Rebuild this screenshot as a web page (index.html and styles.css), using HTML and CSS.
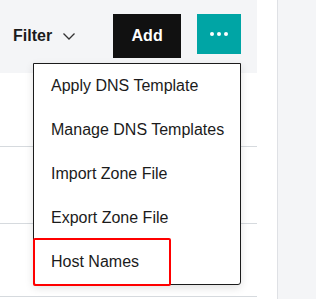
FILE: index.html
```html
<!DOCTYPE html>
<html lang="en">
  <head>
    <meta charset="UTF-8" />
    <meta name="viewport" content="width=device-width, initial-scale=1.0" />
    <title>DNS Records</title>
    <link rel="stylesheet" href="styles.css">
  </head>
  <body>
    <div class="content">
      <div class="panel">
        <div class="toolbar">
          <button class="filter">
            Filter
            <svg width="12" height="7" viewBox="0 0 12 7"><path d="M0.5 0.5 L6 6 L11.5 0.5" fill="none" stroke="#333" stroke-width="1.3"/></svg>
          </button>
          <button class="btn-add">Add</button>
          <button class="btn-more">
            <span class="dot"></span><span class="dot"></span><span class="dot"></span>
          </button>
        </div>
        <div class="row r1"></div>
        <div class="row r2"></div>
        <div class="row r3"></div>

        <!-- меню с дополнительными действиями -->
        <ul class="menu">
          <li>Apply DNS Template</li>
          <li>Manage DNS Templates</li>
          <li>Import Zone File</li>
          <li>Export Zone File</li>
          <li class="marked">Host Names</li>
        </ul>
      </div>
    </div>
    <div class="side"></div>
  </body>
</html>
```

FILE: styles.css
```css
body {
  margin: 0;
  display: flex;
  height: 299px;
  font-family: "Liberation Sans", Arial, sans-serif;
  color: #1b1b1b;
  background: #f4f5f7;
  overflow: hidden;
}
.content {
  width: 277px;
  background: #fff;
  flex-shrink: 0;
}
.side {
  flex: 1;
  border-left: 1px solid #dfe1e5;
  background: #f4f5f7;
}
.panel {
  position: relative;
  width: 257px;
}
.toolbar {
  height: 73px;
  background: #f4f5f7;
  display: flex;
  align-items: flex-start;
  padding-top: 14px;
  box-sizing: border-box;
}
button {
  font-family: inherit;
  border: none;
  cursor: pointer;
}
.filter {
  background: none;
  font-size: 16px;
  font-weight: bold;
  color: #1b1b1b;
  padding: 0;
  margin: 13px 0 0 13px;
  display: flex;
  align-items: center;
  gap: 11px;
}
.filter svg {
  margin-top: 1px;
}
.btn-add {
  margin-left: 38px;
  width: 68px;
  height: 44px;
  background: #111;
  color: #fff;
  font-size: 16px;
  font-weight: bold;
}
.btn-more {
  margin-left: 16px;
  width: 44px;
  height: 40px;
  background: #00a5a5;
  display: flex;
  align-items: center;
  justify-content: center;
  gap: 3px;
  padding: 0;
}
.dot {
  width: 4px;
  height: 4px;
  border-radius: 50%;
  background: #fff;
}
.row {
  border-bottom: 1px solid #d6dade;
}
.r1 {
  height: 73px;
}
.r2 {
  height: 76px;
}
.r3 {
  height: 72px;
}
.menu {
  position: absolute;
  top: 63px;
  left: 33px;
  width: 206px;
  margin: 0;
  padding: 0;
  list-style: none;
  background: #fff;
  border: 1px solid #1b1b1b;
  border-radius: 0 0 3px 3px;
  box-shadow: 0 3px 8px rgba(0, 0, 0, 0.12);
}
.menu li {
  height: 44px;
  line-height: 44px;
  padding-left: 17px;
  font-size: 16px;
}
.menu li.marked {
  position: relative;
}
.menu li.marked::after {
  content: "";
  position: absolute;
  left: -1px;
  top: -2px;
  width: 134px;
  height: 44px;
  border: 2px solid #f00;
  border-radius: 2px;
}
```
